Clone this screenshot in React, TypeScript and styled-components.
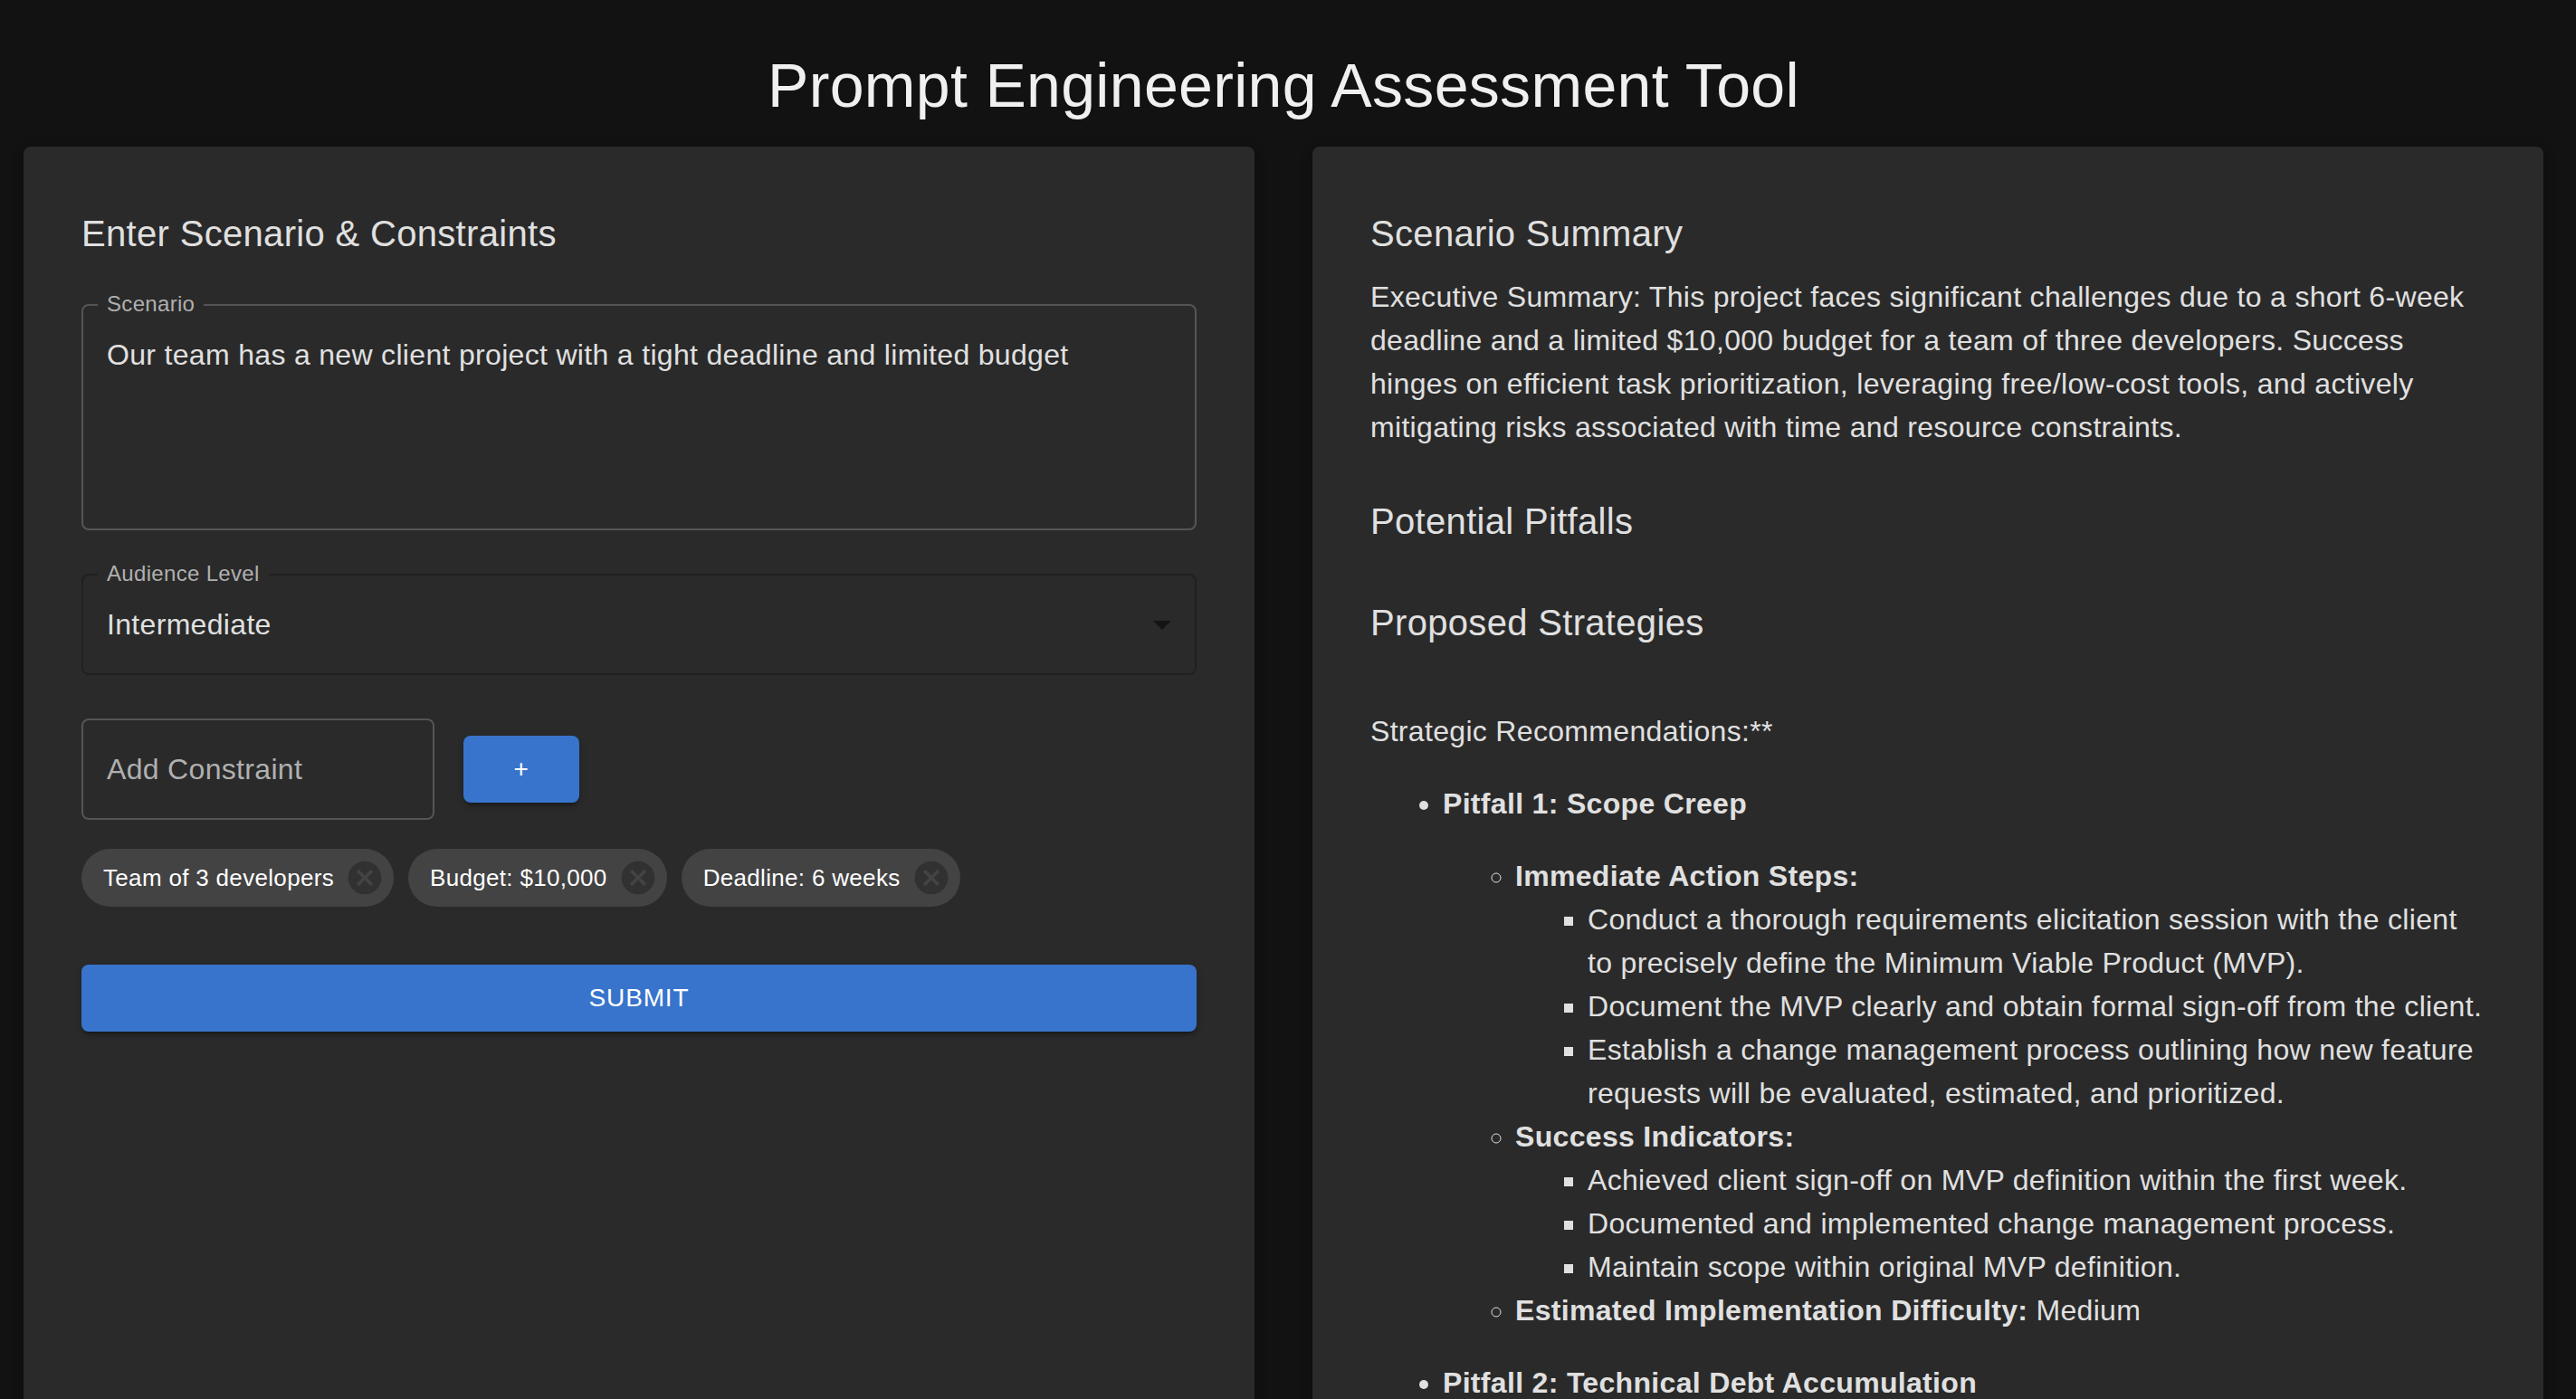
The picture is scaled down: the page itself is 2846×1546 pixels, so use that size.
import { useState } from 'react';
import styled, { createGlobalStyle, css } from 'styled-components';

const GlobalStyle = createGlobalStyle`
  *, *::before, *::after { box-sizing: border-box; }
  body {
    margin: 0;
    background: #121212;
    color: #e0e0e0;
    font-family: Helvetica, Arial, "Liberation Sans", sans-serif;
    font-size: 32px;
    line-height: 48px;
    letter-spacing: 0.01em;
  }
`;

const Page = styled.main`
  height: 100vh;
  overflow-y: auto;
  scrollbar-width: none;
  padding: 52px 36px 0 26px;
`;

const Title = styled.h1`
  margin: 0 0 26px;
  font-size: 68px;
  line-height: 84px;
  font-weight: 400;
  color: #f0f0f0;
  text-align: center;
`;

const Columns = styled.div`
  display: grid;
  grid-template-columns: repeat(2, minmax(0, 1fr));
  gap: 64px;
`;

const Panel = styled.section`
  padding: 64px;
  border-radius: 8px;
  background: #2a2a2a;
  box-shadow:
    0 6px 6px -4px rgba(0, 0, 0, 0.2),
    0 6px 8px rgba(0, 0, 0, 0.14),
    0 2px 16px rgba(0, 0, 0, 0.12);
`;

const Heading = styled.h2`
  margin: 0 0 14px;
  font-size: 40px;
  line-height: 64px;
  font-weight: 400;
`;

const Section = styled.section`
  & + & { margin-top: 48px; }
  & + & > ${Heading} { margin-bottom: 0; }
`;

const Paragraph = styled.p`
  margin: 0;
`;

const Form = styled.form`
  display: flex;
  flex-direction: column;
  gap: 48px;
  padding-top: 32px;
`;

const Field = styled.div`
  position: relative;
  display: flex;
`;

const FieldLabel = styled.label`
  position: absolute;
  top: -12px;
  left: 18px;
  padding: 0 10px;
  background: #2a2a2a;
  color: #b0b0b0;
  font-size: 24px;
  line-height: 24px;
`;

const control = css`
  width: 100%;
  margin: 0;
  padding: 31px 26px;
  border: 2px solid #555555;
  border-radius: 8px;
  background: transparent;
  color: #e0e0e0;
  font: inherit;
  line-height: 46px;
  letter-spacing: inherit;
  outline: none;
`;

const TextArea = styled.textarea`
  ${control}
  resize: none;
`;

const Select = styled.select`
  ${control}
  appearance: none;
  border-color: #202020;
`;

const Arrow = styled.svg`
  position: absolute;
  top: 32px;
  right: 14px;
  width: 48px;
  height: 48px;
  fill: #141414;
  pointer-events: none;
`;

const Constraints = styled.div`
  display: flex;
  flex-direction: column;
  gap: 32px;
`;

const AddRow = styled.div`
  display: flex;
  align-items: center;
  gap: 32px;
`;

const ConstraintInput = styled.input`
  ${control}
  width: 390px;
  &::placeholder { color: #b0b0b0; opacity: 1; }
`;

const Button = styled.button`
  min-width: 128px;
  padding: 12px 32px;
  border: 0;
  border-radius: 8px;
  background: #3874cb;
  color: #ffffff;
  font: inherit;
  font-size: 28px;
  line-height: 50px;
  letter-spacing: 0.03em;
  box-shadow:
    0 6px 2px -4px rgba(0, 0, 0, 0.2),
    0 4px 4px rgba(0, 0, 0, 0.14),
    0 2px 10px rgba(0, 0, 0, 0.12);
  cursor: pointer;
`;

const SubmitButton = styled(Button)`
  margin-top: 16px;
`;

const Chips = styled.ul`
  display: flex;
  flex-wrap: wrap;
  gap: 16px;
  margin: 0;
  padding: 0;
  list-style: none;
`;

const Chip = styled.li`
  display: flex;
  align-items: center;
  gap: 12px;
  height: 64px;
  padding: 0 10px 0 24px;
  border-radius: 32px;
  background: #434343;
  color: #ffffff;
  font-size: 26px;
`;

const RemoveButton = styled.button`
  display: flex;
  padding: 0;
  border: 0;
  background: none;
  color: #313131;
  cursor: pointer;
  svg { width: 44px; height: 44px; fill: currentColor; }
`;

const Report = styled.div`
  padding-top: 64px;
  p { margin: 0 0 32px; }
  ul { margin: 0; padding-left: 80px; }
  li > p + ul { margin-bottom: 32px; }
`;

const plans = [
  {
    title: 'Pitfall 1: Scope Creep',
    groups: [
      {
        label: 'Immediate Action Steps:',
        items: [
          'Conduct a thorough requirements elicitation session with the client to precisely define the Minimum Viable Product (MVP).',
          'Document the MVP clearly and obtain formal sign-off from the client.',
          'Establish a change management process outlining how new feature requests will be evaluated, estimated, and prioritized.',
        ],
      },
      {
        label: 'Success Indicators:',
        items: [
          'Achieved client sign-off on MVP definition within the first week.',
          'Documented and implemented change management process.',
          'Maintain scope within original MVP definition.',
        ],
      },
      { label: 'Estimated Implementation Difficulty:', value: 'Medium', items: [] },
    ],
  },
  { title: 'Pitfall 2: Technical Debt Accumulation', groups: [] },
];

export default function App() {
  const [scenario, setScenario] = useState(
    'Our team has a new client project with a tight deadline and limited budget',
  );
  const [level, setLevel] = useState('Intermediate');
  const [draft, setDraft] = useState('');
  const [constraints, setConstraints] = useState([
    'Team of 3 developers',
    'Budget: $10,000',
    'Deadline: 6 weeks',
  ]);

  const addConstraint = () => {
    if (draft.trim()) {
      setConstraints([...constraints, draft.trim()]);
      setDraft('');
    }
  };

  return (
    <>
      <GlobalStyle />
      <Page>
        <Title>Prompt Engineering Assessment Tool</Title>
        <Columns>
          <Panel>
            <Heading>Enter Scenario &amp; Constraints</Heading>
            <Form onSubmit={(e) => e.preventDefault()}>
              <Field>
                <TextArea
                  id="scenario"
                  rows={4}
                  value={scenario}
                  spellCheck={false}
                  onChange={(e) => setScenario(e.target.value)}
                />
                <FieldLabel htmlFor="scenario">Scenario</FieldLabel>
              </Field>
              <Field>
                <Select id="level" value={level} onChange={(e) => setLevel(e.target.value)}>
                  <option>Beginner</option>
                  <option>Intermediate</option>
                  <option>Advanced</option>
                </Select>
                <FieldLabel htmlFor="level">Audience Level</FieldLabel>
                <Arrow viewBox="0 0 24 24" aria-hidden="true">
                  <path d="M7 10l5 5 5-5z" />
                </Arrow>
              </Field>
              <Constraints>
                <AddRow>
                  <ConstraintInput
                    aria-label="Add Constraint"
                    placeholder="Add Constraint"
                    value={draft}
                    onChange={(e) => setDraft(e.target.value)}
                  />
                  <Button type="button" onClick={addConstraint}>
                    +
                  </Button>
                </AddRow>
                <Chips>
                  {constraints.map((c) => (
                    <Chip key={c}>
                      {c}
                      <RemoveButton
                        type="button"
                        aria-label={`Remove ${c}`}
                        onClick={() => setConstraints(constraints.filter((x) => x !== c))}
                      >
                        <svg viewBox="0 0 24 24" aria-hidden="true">
                          <path d="M12 2C6.47 2 2 6.47 2 12s4.47 10 10 10 10-4.47 10-10S17.53 2 12 2zm5 13.59L15.59 17 12 13.41 8.41 17 7 15.59 10.59 12 7 8.41 8.41 7 12 10.59 15.59 7 17 8.41 13.41 12 17 15.59z" />
                        </svg>
                      </RemoveButton>
                    </Chip>
                  ))}
                </Chips>
              </Constraints>
              <SubmitButton type="submit">SUBMIT</SubmitButton>
            </Form>
          </Panel>
          <Panel>
            <Section>
              <Heading>Scenario Summary</Heading>
              <Paragraph>
                Executive Summary: This project faces significant challenges due to a short 6-week
                deadline and a limited $10,000 budget for a team of three developers. Success hinges
                on efficient task prioritization, leveraging free/low-cost tools, and actively
                mitigating risks associated with time and resource constraints.
              </Paragraph>
            </Section>
            <Section>
              <Heading>Potential Pitfalls</Heading>
            </Section>
            <Section>
              <Heading>Proposed Strategies</Heading>
              <Report>
                <p>Strategic Recommendations:**</p>
                <ul>
                  {plans.map((plan) => (
                    <li key={plan.title}>
                      <p>
                        <strong>{plan.title}</strong>
                      </p>
                      {plan.groups.length > 0 && (
                        <ul>
                          {plan.groups.map((group) => (
                            <li key={group.label}>
                              <strong>{group.label}</strong>
                              {group.value && ` ${group.value}`}
                              {group.items.length > 0 && (
                                <ul>
                                  {group.items.map((item) => (
                                    <li key={item}>{item}</li>
                                  ))}
                                </ul>
                              )}
                            </li>
                          ))}
                        </ul>
                      )}
                    </li>
                  ))}
                </ul>
              </Report>
            </Section>
          </Panel>
        </Columns>
      </Page>
    </>
  );
}
